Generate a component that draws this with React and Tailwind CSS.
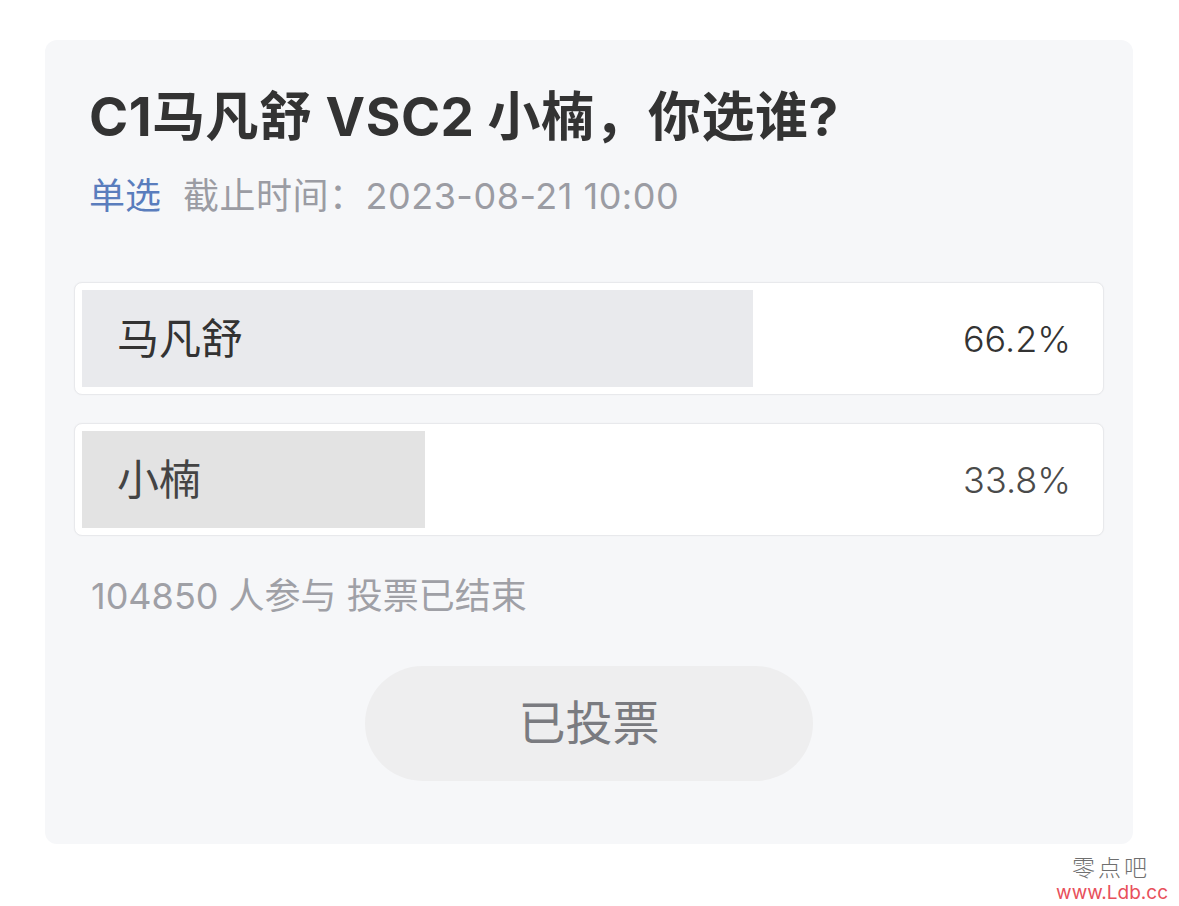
import React from 'react';

const options = [
    { name: '马凡舒', pct: 66.2, bar: 'bg-[#e9eaed]', text: 'text-[#333333]', pctText: 'text-[#333333]' },
    { name: '小楠', pct: 33.8, bar: 'bg-[#e3e3e3]', text: 'text-[#444444]', pctText: 'text-[#4a4a4a]' },
];

const font = { fontFamily: 'Inter, "Noto Sans CJK SC", sans-serif' };

export default function App() {
    return (
        <div className="min-h-[906px] w-[1179px] bg-white pt-[40px]" style={font}>
            <div className="ml-[45px] w-[1088px] rounded-[12px] bg-[#f6f7f9] pt-[46px] pb-[63px]">
                <div className="px-[44px]">
                    <h1 className="text-[53px] leading-[62px] font-bold tracking-[0.5px] text-[#333333] whitespace-nowrap">
                        C1马凡舒 VSC2 小楠，你选谁?
                    </h1>
                    <div className="mt-[26px] flex items-center text-[36px] leading-[44px] whitespace-nowrap">
                        <span className="text-[#5a7dbd]">单选</span>
                        <span className="ml-[22px] tracking-[0.5px] text-[#9b9ca3]">截止时间：2023-08-21 10:00</span>
                    </div>
                </div>

                <div className="mt-[64px] px-[29px] flex flex-col gap-[28px]">
                    {options.map((o) => (
                        <div key={o.name} className="rounded-[8px] border border-[#e8e9ec] bg-white p-[7px] shadow-[0_0_2px_rgba(0,0,0,0.04)]">
                            <div className="relative h-[97px]">
                                <div className={`absolute left-0 top-0 h-full ${o.bar}`} style={{ width: `${o.pct}%` }} />
                                <div className="relative flex h-full items-center justify-between pl-[35px] pr-[25px]">
                                    <span className={`text-[42px] ${o.text}`}>{o.name}</span>
                                    <span className={`text-[36px] font-light ${o.pctText}`}>{o.pct}%</span>
                                </div>
                            </div>
                        </div>
                    ))}
                </div>

                <div className="mt-[38px] px-[46px] text-[36px] leading-[44px] text-[#9fa0a6] whitespace-nowrap">
                    104850 人参与 投票已结束
                </div>

                <div className="mt-[48px] flex justify-center">
                    <div className="flex h-[115px] w-[448px] items-center justify-center rounded-full bg-[#eeeeef] text-[47px] text-[#7a7b80]">
                        已投票
                    </div>
                </div>
            </div>

            <div className="mt-[10px] flex flex-col items-end pr-[11px]">
                <span className="mr-[18px] text-[23px] leading-[28px] font-light tracking-[3px] text-[#6f6f6f]">零点吧</span>
                <span className="text-[19px] leading-[22px] text-[#e8505b]">www.Ldb.cc</span>
            </div>
        </div>
    );
}
